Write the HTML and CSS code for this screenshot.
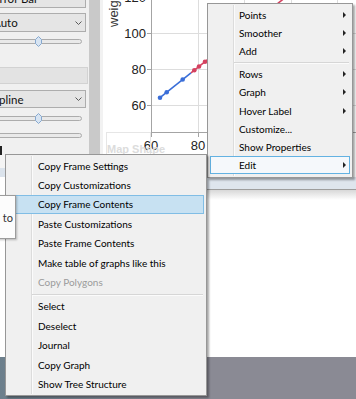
FILE: index.html
```html
<!DOCTYPE html>
<html>
<head>
<meta charset="utf-8">
<link rel="stylesheet" href="styles.css">
</head>
<body>
<div class="screen">
  <div class="workspace">
    <div class="panel">
      <div class="combo combo-first"><span class="combo-text">Error Bar</span><svg class="chev" width="7" height="4" viewBox="0 0 7 4"><polyline points="0.5,0.5 3.5,3.5 6.5,0.5"/></svg></div>
      <div class="combo combo-auto"><span class="combo-text">Auto</span><svg class="chev" width="7" height="4" viewBox="0 0 7 4"><polyline points="0.5,0.5 3.5,3.5 6.5,0.5"/></svg></div>
      <div class="slider s1"><div class="track"></div><svg class="thumb" width="7" height="11" viewBox="0 0 7 11"><polygon points="3.5,0.5 6.5,3.5 6.5,7.5 3.5,10.5 0.5,7.5 0.5,3.5"/></svg></div>
      <div class="graybar"></div>
      <div class="combo combo-spline"><span class="combo-text">Spline</span><svg class="chev" width="7" height="4" viewBox="0 0 7 4"><polyline points="0.5,0.5 3.5,3.5 6.5,0.5"/></svg></div>
      <div class="slider s2"><div class="track"></div><svg class="thumb" width="7" height="11" viewBox="0 0 7 11"><polygon points="3.5,0.5 6.5,3.5 6.5,7.5 3.5,10.5 0.5,7.5 0.5,3.5"/></svg></div>
      <div class="slider s3"><div class="track"></div></div>
      <div class="mark"></div>
      <div class="panel-spacer"></div>
      <div class="band-left"></div>
    </div>
    <div class="vscroll"></div>
    <div class="edge"></div>
    <svg class="chart" width="253" height="177" viewBox="0 0 253 177">
      <g class="grid">
        <line x1="48" y1="33.5" x2="253" y2="33.5"/>
        <line x1="48" y1="69.5" x2="253" y2="69.5"/>
        <line x1="48" y1="105.5" x2="253" y2="105.5"/>
        <line x1="95.5" y1="0" x2="95.5" y2="132"/>
        <line x1="141.5" y1="0" x2="141.5" y2="132"/>
        <line x1="188.5" y1="0" x2="188.5" y2="132"/>
        <line x1="234.5" y1="0" x2="234.5" y2="132"/>
      </g>
      <g class="axis">
        <line x1="48.5" y1="0" x2="48.5" y2="133"/>
        <line x1="48" y1="132.5" x2="253" y2="132.5"/>
        <line x1="44" y1="-2.5" x2="48" y2="-2.5"/>
        <line x1="44" y1="33.5" x2="48" y2="33.5"/>
        <line x1="44" y1="69.5" x2="48" y2="69.5"/>
        <line x1="44" y1="105.5" x2="48" y2="105.5"/>
        <line x1="48.5" y1="133" x2="48.5" y2="137"/>
        <line x1="95.5" y1="133" x2="95.5" y2="137"/>
      </g>
      <text class="axis-title" transform="translate(15 27) rotate(-90)">weight</text>
      <text class="tick-label" x="43" y="1.5">120</text>
      <text class="tick-label" x="43" y="37.5">100</text>
      <text class="tick-label" x="43" y="73.5">80</text>
      <text class="tick-label" x="43" y="109.5">60</text>
      <text class="xtick-label" x="48" y="149.5">60</text>
      <text class="xtick-label" x="95" y="149.5">80</text>
      <rect class="map-box" x="3.5" y="132.5" width="44" height="60"/>
      <text class="map-label" x="4" y="153">Map Shape</text>
      <line class="series-blue" x1="57" y1="97.7" x2="88" y2="72.9"/>
      <line class="series-red" x1="88" y1="72.9" x2="190" y2="-8.7"/>
      <circle class="dot-blue" cx="57" cy="97.7" r="2.3"/>
      <circle class="dot-blue" cx="63.7" cy="92.3" r="2.3"/>
      <circle class="dot-blue" cx="79.7" cy="79.5" r="2.3"/>
      <circle class="dot-red" cx="91.3" cy="70.3" r="2.3"/>
      <circle class="dot-red" cx="96" cy="66.5" r="2.3"/>
      <circle class="dot-red" cx="102" cy="61.7" r="2.3"/>
    </svg>
  </div>
  <div class="lower">
    <div class="lower-left"></div>
    <div class="lower-right">
      <div class="statusband"></div>
      <div class="pane"></div>
    </div>
  </div>
  <div class="desktop"></div>

  <div class="tooltip">to</div>

  <div class="menu menu-top">
    <div class="mi">Points<span class="arrow"></span></div>
    <div class="mi">Smoother<span class="arrow"></span></div>
    <div class="mi">Add<span class="arrow"></span></div>
    <div class="sep"></div>
    <div class="mi">Rows<span class="arrow"></span></div>
    <div class="mi">Graph<span class="arrow"></span></div>
    <div class="mi">Hover Label<span class="arrow"></span></div>
    <div class="mi">Customize...</div>
    <div class="mi">Show Properties</div>
    <div class="mi hl-soft">Edit<span class="arrow"></span></div>
  </div>

  <div class="menu menu-edit">
    <div class="mi">Copy Frame Settings</div>
    <div class="mi">Copy Customizations</div>
    <div class="mi hl">Copy Frame Contents</div>
    <div class="mi">Paste Customizations</div>
    <div class="mi">Paste Frame Contents</div>
    <div class="mi">Make table of graphs like this</div>
    <div class="mi disabled">Copy Polygons</div>
    <div class="sep"></div>
    <div class="mi">Select</div>
    <div class="mi">Deselect</div>
    <div class="mi">Journal</div>
    <div class="mi">Copy Graph</div>
    <div class="mi">Show Tree Structure</div>
  </div>
</div>
</body>
</html>
```

FILE: styles.css
```css
* { box-sizing: border-box; }
html, body { margin: 0; padding: 0; }
body {
  width: 356px;
  height: 399px;
  overflow: hidden;
  background: #ffffff;
  font-family: Lato, "Open Sans", sans-serif;
}
.screen {
  position: relative;
  width: 356px;
  height: 399px;
  display: flex;
  flex-direction: column;
  overflow: hidden;
}

/* ---------- background application ---------- */
.workspace {
  display: flex;
  height: 177px;
  flex: none;
  background: #ffffff;
}
.panel {
  width: 89px;
  flex: none;
  background: #f0f0f0;
  display: flex;
  flex-direction: column;
  overflow: hidden;
}
.combo {
  flex: none;
  margin-left: -30px;
  width: 116px;
  border: 1px solid #adadad;
  background: #e5e5e5;
  display: flex;
  align-items: center;
  justify-content: space-between;
  padding-left: 22px;
  padding-right: 3px;
  font-size: 11.5px;
  color: #111;
}
.combo-first { margin-top: -10px; height: 18px; padding-bottom: 2px; }
.combo-auto { margin-top: 5px; height: 19px; }
.combo-spline { margin-top: 6px; height: 18px; }
.chev polyline { fill: none; stroke: #5a5a5a; stroke-width: 1; }

.slider {
  flex: none;
  position: relative;
  margin-left: -30px;
  width: 112px;
  height: 11px;
  display: flex;
  align-items: center;
}
.s1 { margin-top: 4px; }
.s2 { margin-top: 5px; }
.s3 { margin-top: 6px; }
.track {
  width: 100%;
  height: 5px;
  border: 1px solid #acacac;
  border-radius: 3px;
  background: #e9e9e9;
}
.thumb {
  position: absolute;
  left: 65px;
  top: 0;
}
.thumb polygon { fill: #d7e4f2; stroke: #86a8cf; stroke-width: 1; }
.graybar {
  flex: none;
  margin-top: 20px;
  width: 88px;
  height: 17px;
  background: #e3e3e3;
  border: 1px solid #d2d2d2;
  border-left: none;
}
.mark {
  flex: none;
  margin-top: 5px;
  width: 2px;
  height: 9px;
  background: #222;
}
.panel-spacer { flex: none; height: 13px; background: #f4f4f4; }
.band-left { flex: none; height: 10px; background: #dbe3ec; }

.vscroll { width: 11px; flex: none; background: #c9c9c9; }
.edge { width: 3px; flex: none; background: #f2f2f2; }
.chart { display: block; flex: none; }

.grid line { stroke: #dddddd; stroke-width: 1; }
.axis line { stroke: #a4a4a4; stroke-width: 1; }
.axis-title { font-family: "Liberation Sans", Arial, sans-serif; font-size: 13px; fill: #333; }
.tick-label { font-family: "Liberation Sans", Arial, sans-serif; font-size: 13px; fill: #222; text-anchor: end; }
.xtick-label { font-family: "Liberation Sans", Arial, sans-serif; font-size: 13px; fill: #222; text-anchor: middle; }
.map-box { fill: none; stroke: #e6e6e6; stroke-width: 1; }
.map-label { font-family: "Liberation Sans", Arial, sans-serif; font-size: 11px; font-weight: bold; fill: #dcdcdc; }
.series-blue { stroke: #3a6ed8; stroke-width: 1.6; }
.series-red { stroke: #d4415f; stroke-width: 1.6; }
.dot-blue { fill: #3a6ed8; }
.dot-red { fill: #d4415f; }

.lower { flex: 1; display: flex; }
.lower-left { width: 206px; flex: none; background: #ffffff; }
.lower-right { flex: 1; display: flex; flex-direction: column; }
.statusband {
  flex: none;
  height: 13px;
  background: #dee5ed;
  border-bottom: 1px solid #9d9d9d;
}
.pane { flex: 1; background: linear-gradient(#d8d8d8, #ffffff 10px); }
.desktop {
  flex: none;
  height: 42px;
  background: linear-gradient(90deg, #6c7f8c 0, #828895 110px, #8a8a94 200px);
}

/* ---------- overlays ---------- */
.tooltip {
  position: absolute;
  left: -30px;
  top: 195px;
  width: 46px;
  height: 44px;
  z-index: 3;
  background: #fcfcfc;
  border: 1px solid #9c9c9c;
  box-shadow: 1px 1px 2px rgba(0, 0, 0, 0.25);
  display: flex;
  align-items: center;
  justify-content: flex-end;
  padding-right: 2px;
  font-size: 11px;
  color: #333;
}

.menu {
  position: absolute;
  background: #f0f0f0;
  border: 1px solid #979797;
  box-shadow: 2px 2px 2px rgba(0, 0, 0, 0.35);
  display: flex;
  flex-direction: column;
  font-size: 10px;
  color: #000;
}
.menu::before {
  content: "";
  position: absolute;
  left: 25px;
  top: 1px;
  bottom: 1px;
  width: 1px;
  background: #dcdcdc;
  box-shadow: 1px 0 0 #fbfbfb;
}
.menu-top {
  left: 207px;
  top: 3px;
  width: 146px;
  height: 175px;
  padding: 2px;
  z-index: 1;
}
.menu-edit {
  left: 5px;
  top: 154px;
  width: 202px;
  padding: 1px 2px;
  z-index: 2;
}
.mi {
  position: relative;
  flex: none;
  display: flex;
  align-items: center;
  border: 1px solid transparent;
  white-space: nowrap;
}
.menu-top .mi { height: 18.1px; padding-left: 28px; padding-right: 3px; }
.menu-edit .mi { height: 19.4px; padding-left: 29px; padding-right: 3px; }
.arrow {
  margin-left: auto;
  width: 0;
  height: 0;
  border-left: 3.5px solid #222;
  border-top: 3.5px solid transparent;
  border-bottom: 3.5px solid transparent;
}
.mi.hl-soft { border-color: #63b2e2; background: #f5f8fb; }
.mi.hl { border-color: #80bde5; background: #c7e1f2; }
.mi.disabled { color: #9b9b9b; }
.sep {
  flex: none;
  position: relative;
  height: 5px;
  margin-left: 24px;
}
.sep::after {
  content: "";
  position: absolute;
  left: 0;
  right: 1px;
  top: 2px;
  height: 1px;
  background: #d6d6d6;
  box-shadow: 0 1px 0 #fbfbfb;
}
```
